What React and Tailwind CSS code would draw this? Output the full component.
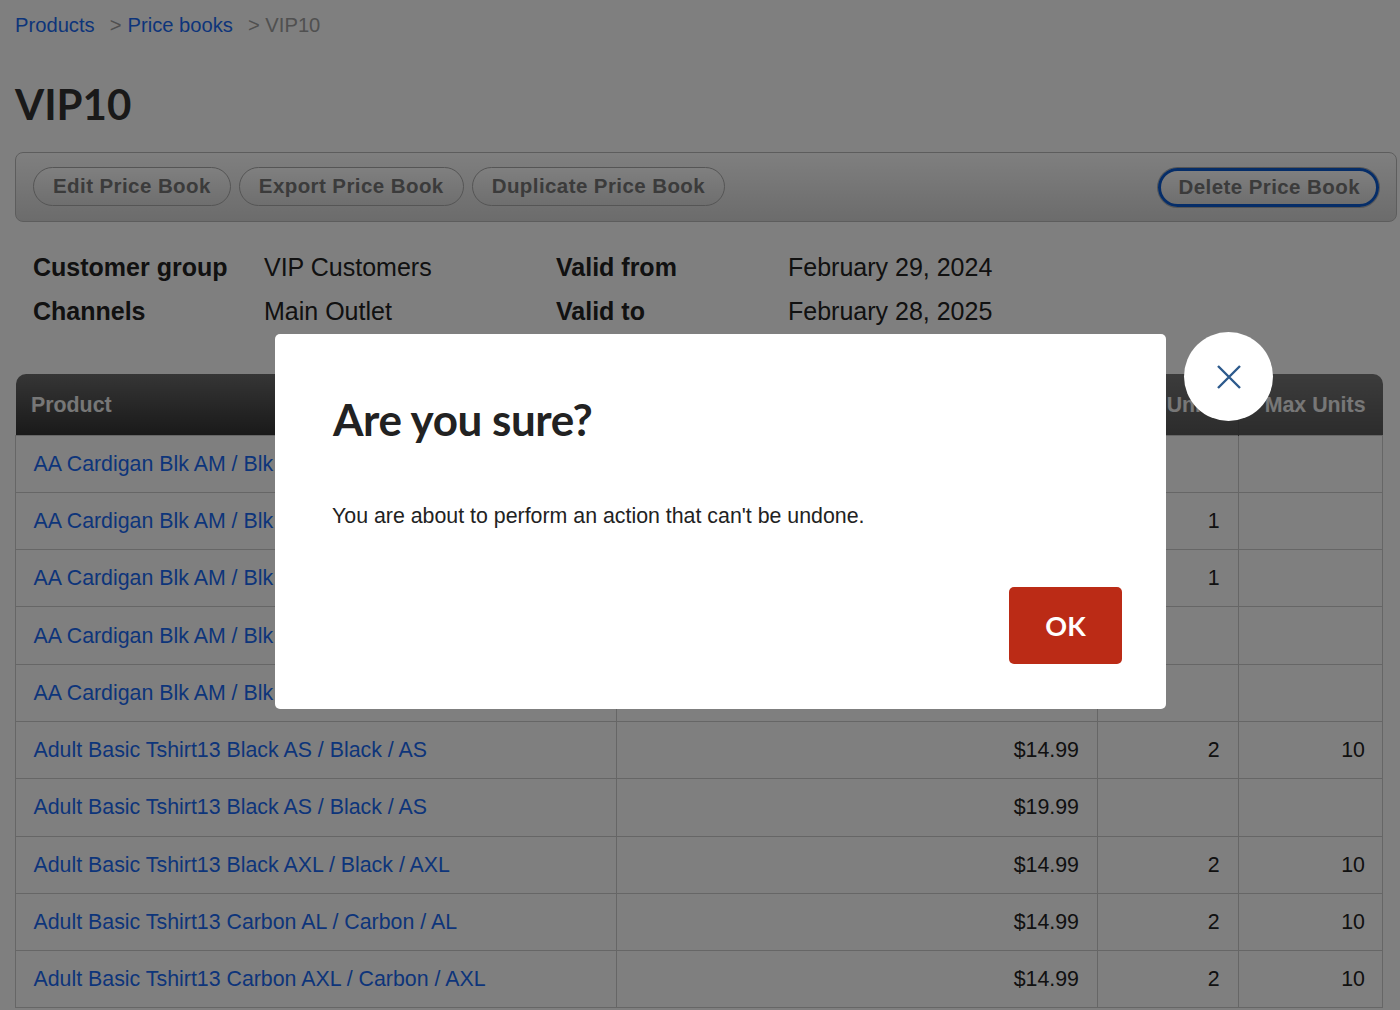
import React from "react";

const rows = [
  ["AA Cardigan Blk AM / Blk", "", "", ""],
  ["AA Cardigan Blk AM / Blk", "", "1", ""],
  ["AA Cardigan Blk AM / Blk", "", "1", ""],
  ["AA Cardigan Blk AM / Blk", "", "", ""],
  ["AA Cardigan Blk AM / Blk", "", "", ""],
  ["Adult Basic Tshirt13 Black AS / Black / AS", "$14.99", "2", "10"],
  ["Adult Basic Tshirt13 Black AS / Black / AS", "$19.99", "", ""],
  ["Adult Basic Tshirt13 Black AXL / Black / AXL", "$14.99", "2", "10"],
  ["Adult Basic Tshirt13 Carbon AL / Carbon / AL", "$14.99", "2", "10"],
  ["Adult Basic Tshirt13 Carbon AXL / Carbon / AXL", "$14.99", "2", "10"],
];

const PillButton = ({ children, className = "border border-[#aaa] px-[19px]" }) => (
  <button className={`h-[39px] rounded-full bg-gradient-to-b from-[#fff] to-[#ddd] text-[20.5px] font-bold text-[#777] tracking-[0.42px] ${className}`}>
    {children}
  </button>
);

export default function App() {
  return (
    <div className="relative h-[1010px] overflow-hidden bg-white font-['Liberation_Sans',Arial,sans-serif] text-[#222]">
      <div className="px-[15px]">
        <div className="flex h-[50px] items-center text-[20.2px] text-[#a0a0a0]">
          <a className="text-[#1a6af5]">Products</a>
          <span className="ml-[15px]">&gt;</span>
          <a className="ml-[6px] text-[#1a6af5]">Price books</a>
          <span className="ml-[15px]">&gt; VIP10</span>
        </div>

        <h1 className="mt-[29px] text-[42px] leading-[50px] font-bold text-[#333] font-['Lato',sans-serif]">VIP10</h1>

        <div className="mt-[23px] mr-[-12px] flex h-[70px] items-center justify-between rounded-[8px] border border-[#bbb] bg-gradient-to-b from-[#fff] to-[#d8d8d8] pl-[17px] pr-[17px]">
          <div className="flex gap-[8px] mt-[-2px]">
            <PillButton>Edit Price Book</PillButton>
            <PillButton>Export Price Book</PillButton>
            <PillButton>Duplicate Price Book</PillButton>
          </div>
          <PillButton className="border-[3px] border-[#0b5ad0] pl-[18px] pr-[16px] shadow-[0_0_0_1px_#aaa] tracking-[0.5px]">Delete Price Book</PillButton>
        </div>

        <div className="mt-[27px] grid grid-cols-[231px_292px_232px_1fr] gap-y-[7px] pl-[18px] text-[25px] leading-[37px]">
          <b>Customer group</b>
          <span>VIP Customers</span>
          <b>Valid from</b>
          <span>February 29, 2024</span>
          <b>Channels</b>
          <span>Main Outlet</span>
          <b>Valid to</b>
          <span>February 28, 2025</span>
        </div>

        <table className="mt-[44px] w-[1368px] table-fixed border-collapse text-[21.35px]">
          <thead>
            <tr className="h-[61px] text-left text-[#eee] font-bold">
              <th className="w-[601px] rounded-tl-[10px] bg-gradient-to-b from-[#6c6c6c] to-[#343434] pl-[15.5px] pt-[1px]">Product</th>
              <th className="w-[481px] bg-gradient-to-b from-[#6c6c6c] to-[#343434] pr-[18px] pt-[1px] text-right">Price</th>
              <th className="w-[141px] bg-gradient-to-b from-[#787878] to-[#585858] pr-[18px] pt-[1px] text-right">Min Units</th>
              <th className="rounded-tr-[10px] border-l border-[#555] bg-gradient-to-b from-[#787878] to-[#585858] pr-[17px] pt-[1px] text-right">Max Units</th>
            </tr>
          </thead>
          <tbody>
            {rows.map((r, i) => (
              <tr key={i} className="h-[57.3px]">
                <td className="border border-[#ccc] pl-[17.5px] text-[#1a6af5] whitespace-nowrap">{r[0]}</td>
                <td className="border border-[#ccc] pr-[18px] text-right">{r[1]}</td>
                <td className="border border-[#ccc] pr-[18.5px] text-right">{r[2]}</td>
                <td className="border border-[#ccc] pr-[17px] text-right">{r[3]}</td>
              </tr>
            ))}
          </tbody>
        </table>
      </div>

      {/* modal */}
      <div className="absolute inset-0 bg-black/50" />
      <div className="absolute left-[275px] top-[334px] flex h-[375px] w-[891px] flex-col rounded-[5px] bg-white pl-[57px] pr-[44px]">
        <h2 className="mt-[59px] pl-[1px] text-[44px] leading-[52px] font-bold text-[#222] font-['Lato',sans-serif] tracking-[-0.45px]">Are you sure?</h2>
        <p className="mt-[56px] text-[21.35px] leading-[30px] text-[#222]">You are about to perform an action that can't be undone.</p>
        <div className="mt-auto mb-[45px] flex justify-end">
          <button className="h-[77px] w-[113px] rounded-[5px] bg-[#bb2b16] pt-[1px] text-[27px] font-bold text-white font-['Lato',sans-serif]">OK</button>
        </div>
      </div>
      <button className="absolute left-[1184px] top-[332px] flex h-[89px] w-[89px] items-center justify-center rounded-full bg-white">
        <svg width="26" height="26" viewBox="0 0 26 26" fill="none" stroke="#2d5a8c" strokeWidth="2.4">
          <path d="M2 2 L24 24 M24 2 L2 24" />
        </svg>
      </button>
    </div>
  );
}
